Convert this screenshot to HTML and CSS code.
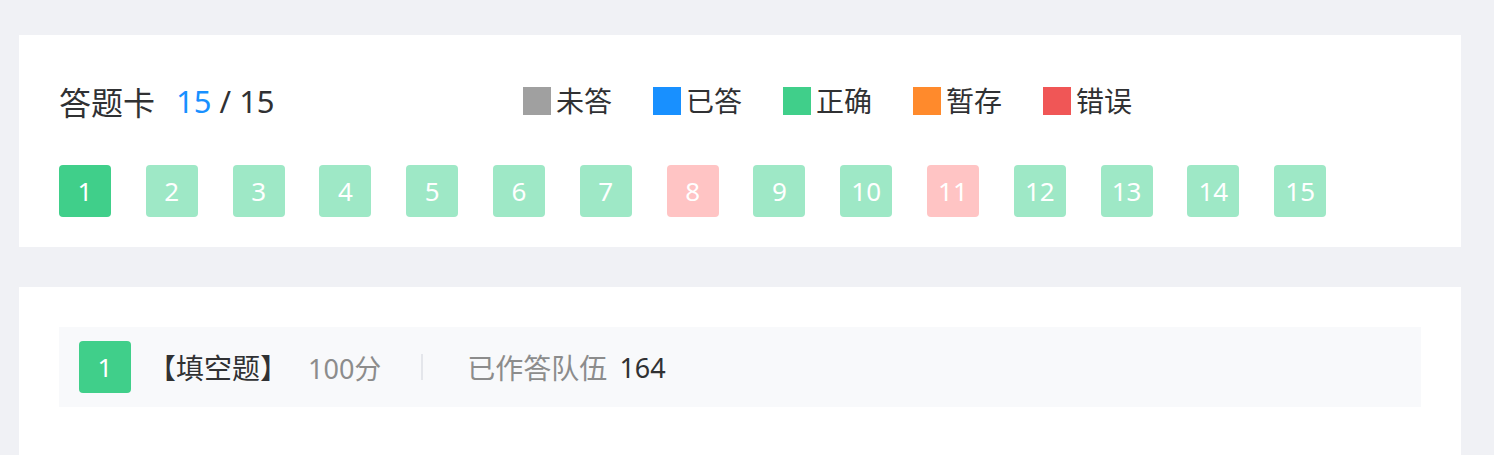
FILE: index.html
```html
<!DOCTYPE html>
<html lang="zh-CN">
<head>
<meta charset="utf-8">
<title>答题卡</title>
<link rel="stylesheet" href="styles.css">
</head>
<body>
<div class="page">
  <section class="card sheet">
    <div class="sheet-head">
      <div class="sheet-title">
        <span class="title-text">答题卡</span>
        <span class="count"><span class="count-done">15</span> / 15</span>
      </div>
      <ul class="legend">
        <li class="legend-item"><span class="swatch swatch-gray"></span>未答</li>
        <li class="legend-item"><span class="swatch swatch-blue"></span>已答</li>
        <li class="legend-item"><span class="swatch swatch-green"></span>正确</li>
        <li class="legend-item"><span class="swatch swatch-orange"></span>暂存</li>
        <li class="legend-item"><span class="swatch swatch-red"></span>错误</li>
      </ul>
    </div>
    <ol class="nums">
      <li class="num num-current">1</li>
      <li class="num num-right">2</li>
      <li class="num num-right">3</li>
      <li class="num num-right">4</li>
      <li class="num num-right">5</li>
      <li class="num num-right">6</li>
      <li class="num num-right">7</li>
      <li class="num num-wrong">8</li>
      <li class="num num-right">9</li>
      <li class="num num-right">10</li>
      <li class="num num-wrong">11</li>
      <li class="num num-right">12</li>
      <li class="num num-right">13</li>
      <li class="num num-right">14</li>
      <li class="num num-right">15</li>
    </ol>
  </section>
  <section class="card question">
    <div class="q-bar">
      <span class="num num-current">1</span>
      <span class="q-type">【填空题】</span>
      <span class="q-score">100分</span>
      <span class="q-divider"></span>
      <span class="q-label">已作答队伍</span>
      <span class="q-value">164</span>
    </div>
  </section>
</div>
</body>
</html>
```
FILE: styles.css
```css
* { box-sizing: border-box; }
html, body { margin: 0; padding: 0; }
body {
  background: #f0f1f5;
  font-family: "Noto Sans", "Noto Sans CJK SC", sans-serif;
  color: #303133;
}
.page {
  padding: 35px 33px 0 19px;
  display: flex;
  flex-direction: column;
  gap: 40px;
}
.card {
  background: #fff;
  padding: 40px;
}
.sheet { padding: 40px 40px 30px; }
.sheet-head {
  display: flex;
  align-items: center;
  height: 52px;
  margin-bottom: 38px;
}
.sheet-title {
  width: 464px;
  display: flex;
  align-items: center;
  gap: 21px;
}
.title-text { font-size: 32px; }
.count { font-size: 31px; }
.count-done { color: #1890ff; }
.legend {
  list-style: none;
  margin: 0;
  padding: 0;
  display: flex;
  gap: 41px;
}
.legend-item {
  display: flex;
  align-items: center;
  gap: 5px;
  font-size: 28px;
  line-height: 1;
}
.swatch { width: 28px; height: 28px; display: block; }
.swatch-gray { background: #a0a0a0; }
.swatch-blue { background: #1890ff; }
.swatch-green { background: #40cf8a; }
.swatch-orange { background: #ff8a2c; }
.swatch-red { background: #f05656; }
.nums {
  list-style: none;
  margin: 0;
  padding: 0;
  display: flex;
  gap: 34.8px;
}
.num {
  width: 52px;
  height: 52px;
  border-radius: 4px;
  color: #fff;
  font-size: 26px;
  display: flex;
  align-items: center;
  justify-content: center;
  flex: none;
}
.num-current { background: #40cf8a; }
.num-right { background: #9ee8c6; }
.num-wrong { background: #ffc4c4; }
.question { height: 200px; }
.q-bar {
  background: #f8f9fb;
  height: 80px;
  padding: 0 20px;
  display: flex;
  align-items: center;
  font-size: 28px;
}
.q-bar .num { font-size: 26px; }
.q-type { margin-left: 17px; color: #303133; }
.q-score { margin-left: 20px; color: #8c8c8c; font-size: 27px; }
.q-divider {
  width: 2px;
  height: 26px;
  background: #e4e6eb;
  margin: 0 44px 0 40px;
}
.q-label { color: #8c8c8c; }
.q-value { margin-left: 12px; color: #303133; font-size: 27px; }
```
